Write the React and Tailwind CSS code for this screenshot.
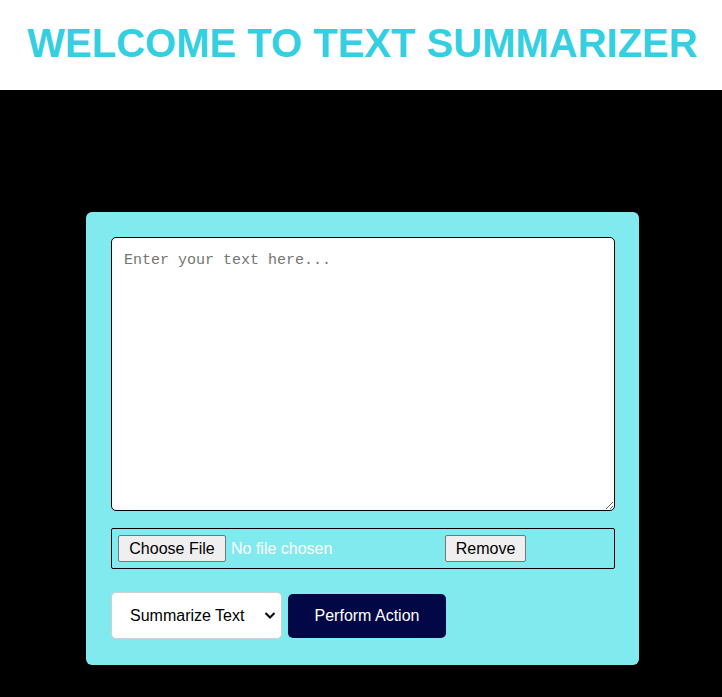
import { useState } from 'react';

function App() {
  const [text, setText] = useState('');
  const [mode, setMode] = useState('summarize');

  return (
    <div className="min-h-[697px] bg-black font-['Liberation_Sans',Arial,sans-serif]">
      <header className="h-[90px] bg-white pt-[20px] pl-[3px]">
        <h1 className="text-center text-[40px] font-bold leading-[46px] text-[#34cfe0]">
          WELCOME TO TEXT SUMMARIZER
        </h1>
      </header>

      <main className="pt-[122px] pb-[33px]">
        <div className="ml-[86px] w-[553px] rounded-[6px] bg-[#80eaee] px-[25px] pt-[25px] pb-[26px]">
          <textarea
            value={text}
            onChange={(e) => setText(e.target.value)}
            placeholder="Enter your text here..."
            className="block h-[274px] w-[504px] rounded-[5px] border border-black bg-white px-[12px] pt-[14px] pb-[12px] font-['Liberation_Mono',monospace] text-[15px] leading-[18px] text-black placeholder:text-[#757575] focus:outline-none"
          />

          {/* file picker row */}
          <div className="mt-[17px] flex h-[41px] w-[504px] items-center rounded-[2px] border border-black px-[6px]">
            <label className="flex h-[27px] w-[108px] cursor-pointer items-center justify-center rounded-[2px] border border-[#767676] bg-[#efefef] text-[16px] text-black">
              Choose File
              <input type="file" className="hidden" />
            </label>
            <span className="ml-[5px] w-[214px] text-[16px] text-white">No file chosen</span>
            <button
              type="button"
              className="flex h-[27px] w-[81px] items-center justify-center rounded-[2px] border border-[#767676] bg-[#efefef] text-[16px] text-black"
            >
              Remove
            </button>
          </div>

          <div className="mt-[23px] flex items-center gap-[6px]">
            <div className="relative">
              <select
                value={mode}
                onChange={(e) => setMode(e.target.value)}
                className="h-[47px] w-[171px] appearance-none rounded-[5px] border border-[#d0d0d0] bg-white pl-[18px] text-[16px] text-black focus:outline-none"
              >
                <option value="summarize">Summarize Text</option>
                <option value="keywords">Extract Keywords</option>
              </select>
              <svg
                className="pointer-events-none absolute right-[6px] top-[19px]"
                width="12"
                height="9"
                viewBox="0 0 12 9"
                fill="none"
              >
                <path d="M1.5 2l4.5 4.5L10.5 2" stroke="#111" strokeWidth="2.2" />
              </svg>
            </div>
            <button
              type="button"
              className="h-[44px] w-[158px] rounded-[5px] bg-[#020845] pt-[1px] text-[16px] text-white"
            >
              Perform Action
            </button>
          </div>
        </div>
      </main>
    </div>
  );
}

export default App;
